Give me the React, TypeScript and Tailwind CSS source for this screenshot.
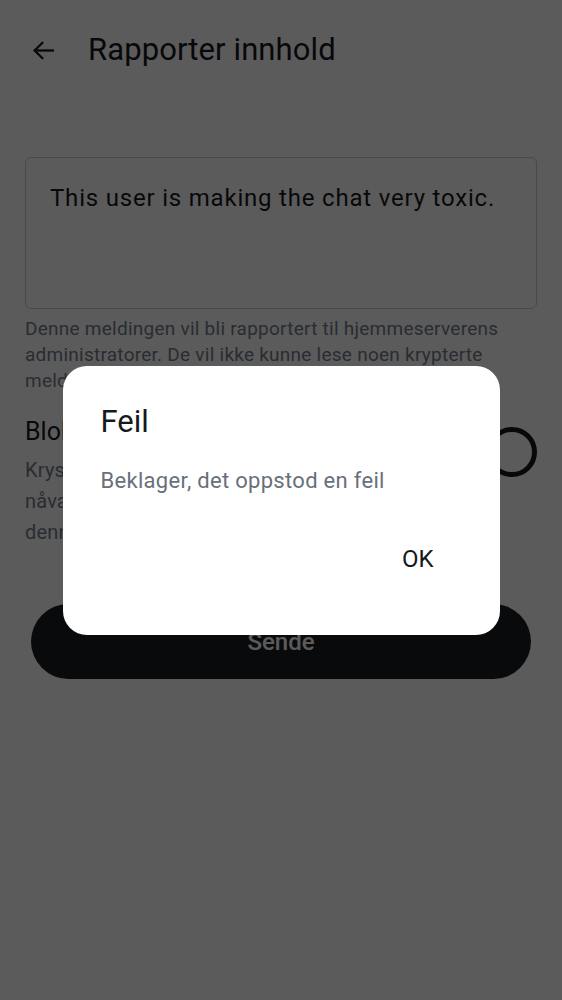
import React from "react";

export default function App() {
  return (
    <div
      className="relative min-h-screen w-full overflow-hidden bg-white text-[#17191c]"
      style={{ fontFamily: "Roboto, 'Noto Sans', sans-serif" }}
    >
      <header className="flex h-[100px] items-center">
        <div className="flex w-[88px] items-center pl-[31px]">
          <svg width="25" height="25" viewBox="0 0 24 24" fill="none" stroke="#17191c" strokeWidth="2.2" strokeLinecap="square">
            <path d="M21 12H4" />
            <path d="M11 4.5L3.5 12L11 19.5" strokeLinecap="round" strokeLinejoin="miter" />
          </svg>
        </div>
        <h1 className="text-[31px] leading-[36px] font-normal tracking-[0.1px]">Rapporter innhold</h1>
      </header>

      <main className="px-[25px] pt-[57px]">
        <div className="h-[152px] rounded-[6px] border border-[#c8ccd2] px-[24px] pt-[25px] text-[24px] leading-[30px] tracking-[0.8px] text-[#17191c]">
          This user is making the chat very toxic.
        </div>
        <p className="mt-[7px] text-[19px] leading-[26px] tracking-[0.25px] text-[#737d8c]">
          Denne meldingen vil bli rapportert til hjemmeserverens administratorer. De vil ikke kunne lese noen krypterte meldinger.
        </p>

        <div className="mt-[20px] flex h-[36px] items-start justify-between">
          <div className="text-[25px] leading-[36px]">Blokker bruker</div>
          <div className="mt-[13px] h-[50px] w-[50px] shrink-0 rounded-full border-[5px] border-[#17191c]" />
        </div>
        <p className="mt-[5px] text-[20px] leading-[31px] tracking-[0.2px] text-[#737d8c]">
          Kryss av hvis du vil skjule alle
          <br />
          nåværende og framtidige meldinger fra
          <br />
          denne brukeren.
        </p>

        <div className="mt-[56px] px-[6px]">
          <button className="flex h-[75px] w-full items-center justify-center rounded-full bg-[#1b1d22] text-[24px] font-medium text-white">
            Sende
          </button>
        </div>
      </main>

      <div className="fixed inset-0 flex items-center justify-center bg-black/[0.643]">
        <div className="h-[269px] w-[437px] rounded-[24px] bg-white px-[38px] pt-[38px]">
          <h2 className="text-[31px] leading-[36px] font-normal text-[#17191c]">Feil</h2>
          <p className="mt-[26px] text-[22px] leading-[30px] tracking-[0.3px] text-[#68707a]">
            Beklager, det oppstod en feil
          </p>
          <div className="mt-[48px] flex justify-end pr-[28px]">
            <button className="text-[24px] font-normal leading-[30px] text-[#17191c]">OK</button>
          </div>
        </div>
      </div>
    </div>
  );
}
